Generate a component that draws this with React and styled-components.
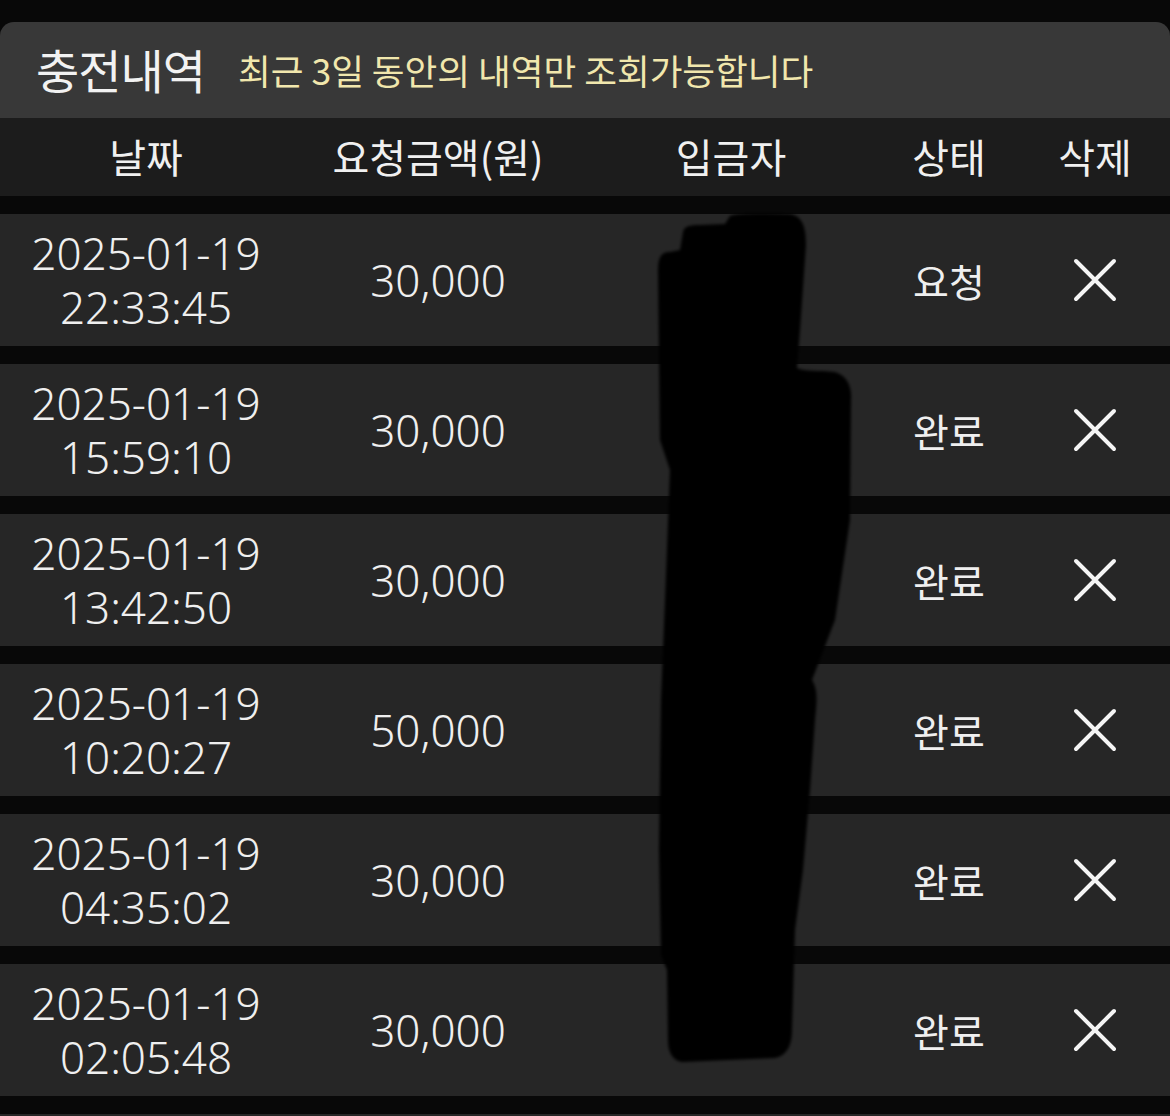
import React from 'react';
import styled, { createGlobalStyle } from 'styled-components';

//------------------------------------------------------------------------------
// STYLE:
//------------------------------------------------------------------------------
const GlobalStyle = createGlobalStyle`
  html, body {
    margin: 0;
    padding: 0;
    background: #080808;
    overflow: hidden;
  }
  body {
    font-family: "Noto Sans", "Noto Sans CJK KR", sans-serif;
    color: #eeeeee;
  }
`;

const COLS = '292px 292px 294px 142px 150px';

const Page = styled.div`
  position: relative;
  width: 1170px;
  height: 1116px;
  padding-top: 22px;
  box-sizing: border-box;
  background: #080808;
  overflow: hidden;
`;

const TitleBar = styled.div`
  display: flex;
  align-items: center;
  height: 96px;
  padding: 0 0 4px 36px;
  box-sizing: border-box;
  background: #383838;
  border-radius: 14px 14px 0 0;
  gap: 33px;
`;

const Title = styled.h2`
  margin: 0;
  font-family: "Noto Sans CJK KR", sans-serif;
  font-weight: 400;
  font-size: 47px;
  color: #f2f2f2;
  letter-spacing: -1px;
`;

const Notice = styled.span`
  font-family: "Noto Sans CJK KR", sans-serif;
  font-size: 35.6px;
  color: #f1e7ad;
  padding-top: 2px;
`;

const HeadRow = styled.div`
  display: grid;
  grid-template-columns: ${COLS};
  height: 78px;
  align-items: center;
  background: #1c1c1c;
`;

const HeadCell = styled.div`
  text-align: center;
  font-family: "Noto Sans CJK KR", sans-serif;
  font-size: 40px;
  color: #f0f0f0;
  padding-bottom: 2px;
`;

const List = styled.div`
  display: flex;
  flex-direction: column;
  gap: 18px;
  padding-top: 18px;
`;

const Row = styled.div`
  display: grid;
  grid-template-columns: ${COLS};
  height: 132px;
  align-items: center;
  background: #262626;
  flex-shrink: 0;
`;

const Cell = styled.div`
  display: flex;
  flex-direction: column;
  align-items: center;
  justify-content: center;
  font-size: ${p => (p.kr ? '39px' : '44px')};
  font-family: ${p => (p.kr ? '"Noto Sans CJK KR", sans-serif' : '"Noto Sans", "Noto Sans CJK KR", sans-serif')};
  font-weight: ${p => (p.kr ? 400 : 300)};
  line-height: 54px;
  color: #efefef;
`;

const DelButton = styled.button`
  display: flex;
  align-items: center;
  justify-content: center;
  margin: 0 auto;
  padding: 0;
  background: none;
  border: 0;
  cursor: pointer;
`;

const Redaction = styled.svg`
  position: absolute;
  left: 0;
  top: 0;
  pointer-events: none;
`;

//------------------------------------------------------------------------------
// DATA:
//------------------------------------------------------------------------------
const rows = [
  { date: '2025-01-19', time: '22:33:45', amount: '30,000', status: '요청' },
  { date: '2025-01-19', time: '15:59:10', amount: '30,000', status: '완료' },
  { date: '2025-01-19', time: '13:42:50', amount: '30,000', status: '완료' },
  { date: '2025-01-19', time: '10:20:27', amount: '50,000', status: '완료' },
  { date: '2025-01-19', time: '04:35:02', amount: '30,000', status: '완료' },
  { date: '2025-01-19', time: '02:05:48', amount: '30,000', status: '완료' },
];

const CloseIcon = () => (
  <svg width="46" height="46" viewBox="0 0 46 46">
    <path d="M4 4 L42 42 M42 4 L4 42" stroke="#f4f4f4" strokeWidth="4" strokeLinecap="round" fill="none" />
  </svg>
);

//------------------------------------------------------------------------------
// COMPONENT:
//------------------------------------------------------------------------------
export default function App() {
  return (
    <Page>
      <GlobalStyle />
      <TitleBar>
        <Title>충전내역</Title>
        <Notice>최근 3일 동안의 내역만 조회가능합니다</Notice>
      </TitleBar>
      <HeadRow>
        <HeadCell>날짜</HeadCell>
        <HeadCell>요청금액(원)</HeadCell>
        <HeadCell>입금자</HeadCell>
        <HeadCell>상태</HeadCell>
        <HeadCell>삭제</HeadCell>
      </HeadRow>
      <List>
        {rows.map((r, i) => (
          <Row key={i}>
            <Cell>
              <span>{r.date}</span>
              <span>{r.time}</span>
            </Cell>
            <Cell>{r.amount}</Cell>
            <Cell kr />
            <Cell kr>{r.status}</Cell>
            <DelButton aria-label="삭제">
              <CloseIcon />
            </DelButton>
          </Row>
        ))}
        {/* next row, scrolled below the fold */}
        <Row />
      </List>
      {/* marker scribble hiding the depositor names */}
      <Redaction width="1170" height="1116" viewBox="0 0 1170 1116">
        <defs>
          <filter id="soft" x="-10%" y="-10%" width="120%" height="120%">
            <feGaussianBlur stdDeviation="1.6" />
          </filter>
        </defs>
        <path
          filter="url(#soft)"
          fill="#000"
          d="M730 216 Q740 212 790 214 C803 216 806 228 806 245 L800 330 L797 368
             C805 372 818 370 835 372 C848 376 852 388 851 400 L850 520 L835 620 L812 680
             C818 690 817 700 815 720 L810 790 L803 870 L795 930 L792 1030
             C792 1048 785 1056 775 1058 L682 1062 C671 1060 668 1050 668 1040
             L667 970 L661 955 L659 850 L661 700 L665 600 L670 470 L660 440 L658 270
             C658 256 662 252 670 252 L680 250 L683 232 C684 226 690 225 700 225 L725 224 Z"
        />
      </Redaction>
    </Page>
  );
}
